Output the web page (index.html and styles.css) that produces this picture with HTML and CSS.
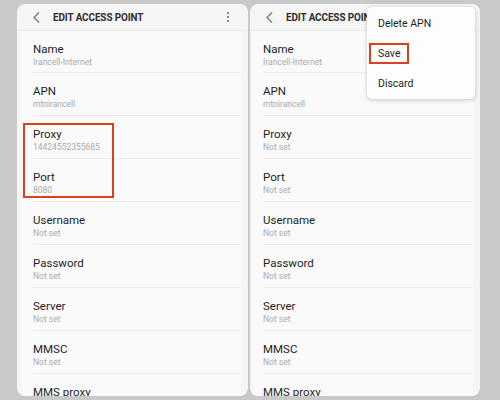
FILE: index.html
```html
<!DOCTYPE html>
<html lang="en">
<head>
    <meta charset="UTF-8">
    <link rel="stylesheet" href="styles.css">
</head>
<body>
    <div class="screens">
        <div class="phone">
            <div class="bar">
                <svg class="back" width="7" height="11" viewBox="0 0 7 11"><path d="M6 0.5L1 5.5L6 10.5" fill="none" stroke="#7a7a7a" stroke-width="1.3"/></svg>
                <span class="title">EDIT ACCESS POINT</span>
                <span class="more"><i></i><i></i><i></i></span>
            </div>
            <div class="list">
                <div class="row"><div class="lbl">Name</div><div class="val">Irancell-Internet</div></div>
                <div class="row"><div class="lbl">APN</div><div class="val">mtnirancell</div></div>
                <div class="row"><div class="lbl">Proxy</div><div class="val">14424552355685</div></div>
                <div class="row"><div class="lbl">Port</div><div class="val">8080</div></div>
                <div class="row"><div class="lbl">Username</div><div class="val">Not set</div></div>
                <div class="row"><div class="lbl">Password</div><div class="val">Not set</div></div>
                <div class="row"><div class="lbl">Server</div><div class="val">Not set</div></div>
                <div class="row"><div class="lbl">MMSC</div><div class="val">Not set</div></div>
                <div class="row"><div class="lbl">MMS proxy</div></div>
            </div>
            <div class="mark"></div>
        </div>
        <div class="phone">
            <div class="bar">
                <svg class="back" width="7" height="11" viewBox="0 0 7 11"><path d="M6 0.5L1 5.5L6 10.5" fill="none" stroke="#7a7a7a" stroke-width="1.3"/></svg>
                <span class="title">EDIT ACCESS POINT</span>
            </div>
            <div class="list">
                <div class="row"><div class="lbl">Name</div><div class="val">Irancell-Internet</div></div>
                <div class="row"><div class="lbl">APN</div><div class="val">mtnirancell</div></div>
                <div class="row"><div class="lbl">Proxy</div><div class="val">Not set</div></div>
                <div class="row"><div class="lbl">Port</div><div class="val">Not set</div></div>
                <div class="row"><div class="lbl">Username</div><div class="val">Not set</div></div>
                <div class="row"><div class="lbl">Password</div><div class="val">Not set</div></div>
                <div class="row"><div class="lbl">Server</div><div class="val">Not set</div></div>
                <div class="row"><div class="lbl">MMSC</div><div class="val">Not set</div></div>
                <div class="row"><div class="lbl">MMS proxy</div></div>
            </div>
            <div class="menu">
                <div class="item">Delete APN</div>
                <div class="item"><span class="save">Save</span></div>
                <div class="item">Discard</div>
            </div>
        </div>
    </div>
</body>
</html>
```

FILE: styles.css
```css
body{margin: 0;background: #c9c9c9;font-family: Roboto, "Liberation Sans", sans-serif;}
.screens{display: flex;gap: 2px;padding: 4px 0 0 17px;height: 396px;box-sizing: border-box;}
.phone{position: relative;width: 231px;height: 392px;background: #f5f5f5;border-radius: 8px;overflow: hidden;display: flex;flex-direction: column;}
.phone + .phone{width: 230px;}
.bar{height: 26px;flex: none;display: flex;align-items: center;padding-left: 16px;border-bottom: 1px solid #ececec;}
.back{margin-right: 13px;}
.title{font-size: 11px;font-weight: 700;color: #2e2e2e;letter-spacing: -0.1px;transform: scaleX(0.9);transform-origin: left center;white-space: nowrap;}
.more{margin-left: auto;margin-right: 19px;display: flex;flex-direction: column;gap: 2px;}
.more i{display: block;width: 2px;height: 2px;border-radius: 1px;background: #666;}
.list{flex: 1;margin: 0 7px 0 5px;background: #fafafa;padding-left: 11px;}
.phone + .phone .list{margin-left: 2px;padding-left: 11px;}
.row{height: 43px;padding-top: 11px;box-sizing: border-box;border-bottom: 1px solid #ededed;}
.row:first-child{height: 42px;}
.row:last-child{border-bottom: 0;}
.lbl{font-size: 11.5px;line-height: 14px;color: #1e1e1e;}
.val{font-size: 8.5px;line-height: 12px;color: #ababab;}
.mark{position: absolute;left: 6px;top: 119px;width: 87px;height: 71px;border: 2px solid #dc3f1c;}
.menu{position: absolute;left: 117px;top: 3px;width: 108px;height: 92px;background: #fdfdfd;border-radius: 5px;box-shadow: 0 1px 4px rgba(0,0,0,0.22);padding-top: 1px;box-sizing: border-box;}
.item{height: 30px;display: flex;align-items: center;padding-left: 11px;font-size: 10.5px;color: #1e1e1e;}
.save{margin-left: -9px;padding: 2px 7px;border: 2px solid #dc3f1c;}
```
